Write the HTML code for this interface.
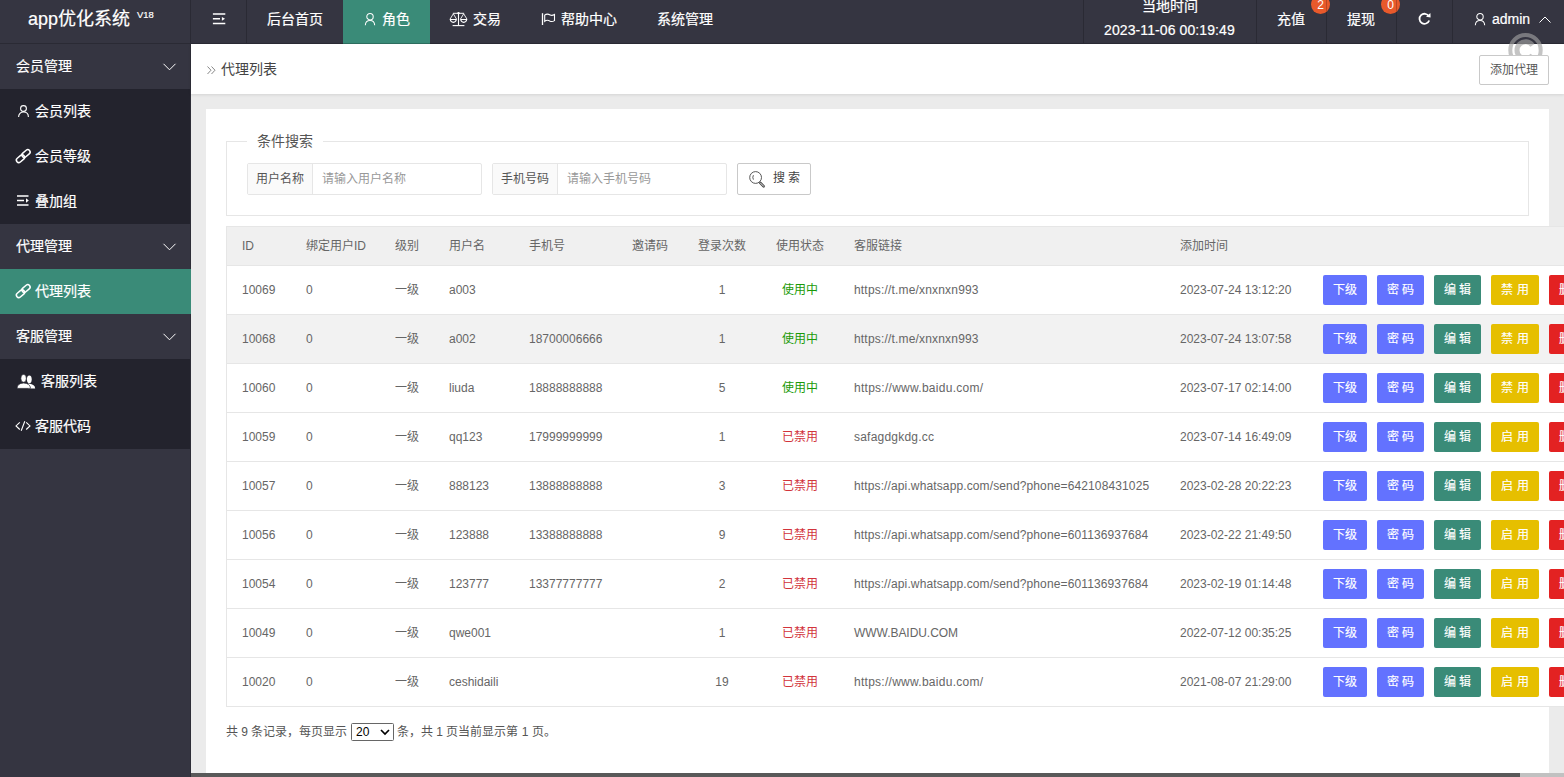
<!DOCTYPE html>
<html lang="zh-CN"><head><meta charset="utf-8">
<style>
*{box-sizing:border-box;margin:0;padding:0}
html,body{width:1564px;height:777px;overflow:hidden;font-family:"Liberation Sans",sans-serif;background:#ebebeb}
.abs{position:absolute}
svg{position:absolute;overflow:visible}
#top{left:0;top:0;width:1564px;height:44px;background:#353541;color:#fff;font-size:14px}
#top .sep{position:absolute;top:0;width:1px;height:43px;background:rgba(0,0,0,.2);z-index:4}
#top .bl{position:absolute;left:0;top:43px;width:1564px;height:1px;background:rgba(0,0,0,.2)}
#top .t{position:absolute;white-space:nowrap;line-height:20px;-webkit-text-stroke:0.2px #fff}
#logo{left:28px;top:7px;font-size:18px;line-height:24px!important;-webkit-text-stroke:0.3px #fff}
#logo sup{font-size:9.4px;position:absolute;left:109px;top:1.5px;line-height:12px;-webkit-text-stroke:0.2px #fff}
#side{left:0;top:44px;width:191px;height:733px;background:#353541;color:#fff;font-size:14px}
#side .g{position:absolute;left:0;width:190px;height:45px;background:#353541}
#side .i{position:absolute;left:0;width:190px;height:45px;background:#23232d}
#side .on{background:#3a8b78;width:191px;z-index:2}
#side .t{position:absolute;left:35px;top:12px;line-height:20px;white-space:nowrap;-webkit-text-stroke:0.2px #fff}
#side .g .t{left:16px}
#side .sl{position:absolute;left:190px;top:0;width:1px;height:733px;background:rgba(0,0,0,.15)}
#crumb{left:191px;top:44px;width:1373px;height:50px;background:#fff;box-shadow:0 1px 3px rgba(0,0,0,.10)}
#card{left:206px;top:109px;width:1343px;height:700px;background:#fff}
.btn{position:absolute;height:30px;line-height:30px;color:#fff;font-size:12px;border-radius:2px;text-align:center;white-space:nowrap;top:9px;-webkit-text-stroke:0.15px #fff}
.b1{background:#6372ff}.b2{background:#3a8b78}.b3{background:#e6bf00}.b4{background:#e32222}
#fs{left:226px;top:141px;width:1303px;height:75px;border:1px solid #e6e6e6}
#legend{left:247px;top:131px;width:76px;height:20px;background:#fff;color:#555;font-size:14px;line-height:20px;text-align:center}
.ig{position:absolute;top:163px;height:32px;border:1px solid #e6e6e6;border-radius:2px;background:#fff;font-size:12px}
.ig .lb{position:absolute;left:0;top:0;width:65px;height:30px;background:#fafafa;border-right:1px solid #e6e6e6;color:#555;line-height:30px;text-align:center}
.ig .ph{position:absolute;left:74px;top:0;line-height:30px;color:#999;white-space:nowrap}
#tbl{left:226px;top:226px;width:1400px;height:481px;border:1px solid #e6e6e6;border-right:0;font-size:12px;color:#666}
.tr{position:absolute;left:0;width:1400px;height:49px;border-top:1px solid #e6e6e6;background:#fff}
.th{top:0;height:38px;border-top:0;background:#f0f0f0}
.tr span{position:absolute;white-space:nowrap;line-height:20px;top:14px}
.th span{top:9px}
.c{text-align:center}
.gr{color:#1a9a08}.rd{color:#d2343c}
#pg{left:226px;top:722px;font-size:12px;color:#555;line-height:20px;white-space:nowrap}
#sel{position:absolute;left:125px;top:1px;width:43px;height:18px;border:1px solid #666;border-radius:1.5px;background:#fff;color:#000;font-size:12px;line-height:16px;padding-left:4px}
#sb{left:191px;top:773px;width:1373px;height:4px;background:#c1c1c1}
#sbt{left:191px;top:773px;width:1329px;height:4px;background:#595959}
</style></head><body>
<div id="top" class="abs">
  <div class="t" id="logo">app优化系统<sup>V18</sup></div>
  <div class="sep" style="left:190px"></div>
  <div class="sep" style="left:246px"></div>
  <!-- hamburger -->
  <svg style="left:212px;top:13px" width="14" height="12" viewBox="0 0 14 12"><path d="M0.9 0.95H13.3M0.9 5.85H8M0.9 10.45H13.3" stroke="#fff" stroke-width="1.5" fill="none"/><path d="M9.9 4L13 5.85L9.9 7.7z" fill="#fff"/></svg>
  <div class="t" style="left:267px;top:9px">后台首页</div>
  <div class="abs" style="left:343px;top:0;width:87px;height:44px;background:#3a8b78"></div>
  <svg style="left:364px;top:13px" width="12" height="12" viewBox="0 0 12 12"><circle cx="6" cy="3.7" r="3.2" stroke="#fff" stroke-width="1.05" fill="none"/><path d="M1.3 12.2C1.5 9.2 3.4 7.5 6 7.5S10.5 9.2 10.7 12.2" stroke="#fff" stroke-width="1.05" fill="none"/></svg>
  <div class="t" style="left:382px;top:9px">角色</div>
  <!-- scale -->
  <svg style="left:449px;top:11px" width="19" height="16" viewBox="0 0 19 16"><g stroke="#fff" fill="none"><path d="M3.9 2.3H15.1" stroke-width="1"/><path d="M9.5 2V14.4" stroke-width="1.1"/><path d="M3.6 14.6H15.4" stroke-width="1.1"/><path d="M4.3 2.8L1 8.2M4.3 2.8L7.6 8.2M14.7 2.8L11.4 8.2M14.7 2.8L18 8.2" stroke-width="0.9"/></g><circle cx="9.5" cy="2.1" r="1.2" fill="#fff"/><path fill-rule="evenodd" d="M0.7 8.1H7.9Q7.6 11.9 4.3 11.9Q1 11.9 0.7 8.1Z M2 9H6.6Q6.2 10.7 4.3 10.7Q2.4 10.7 2 9Z M11.1 8.1H18.3Q18 11.9 14.7 11.9Q11.4 11.9 11.1 8.1Z M12.4 9H17Q16.6 10.7 14.7 10.7Q12.8 10.7 12.4 9Z" fill="#fff"/></svg>
  <div class="t" style="left:473px;top:9px">交易</div>
  <!-- flag -->
  <svg style="left:541px;top:13px" width="15" height="13" viewBox="0 0 15 13"><path d="M1.5 0.2V12" stroke="#fff" stroke-width="1.3"/><path d="M3.7 2.1C5.5 0.6 7.5 1 9.2 2C10.8 2.9 12.2 2.3 13.5 1.5V7.6C12.2 8.4 10.8 9 9.2 8.2C7.5 7.2 5.5 6.8 3.7 8.3Z" stroke="#fff" stroke-width="1.1" fill="none"/></svg>
  <div class="t" style="left:561px;top:9px">帮助中心</div>
  <div class="t" style="left:657px;top:9px">系统管理</div>
  <div class="sep" style="left:1083px"></div>
  <div class="t" style="left:1142px;top:-4px">当地时间</div>
  <div class="t" style="left:1104px;top:20px;letter-spacing:0.1px">2023-11-06 00:19:49</div>
  <div class="sep" style="left:1256px"></div>
  <div class="t" style="left:1277px;top:9px">充值</div>
  <div class="abs" style="left:1311px;top:-5px;width:19px;height:19px;border-radius:50%;z-index:3;background:#e8592b;color:#fff;font-size:12px;line-height:20px;text-align:center">2</div>
  <div class="sep" style="left:1326px"></div>
  <div class="t" style="left:1347px;top:9px">提现</div>
  <div class="abs" style="left:1381px;top:-5px;width:19px;height:19px;border-radius:50%;z-index:3;background:#e8592b;color:#fff;font-size:12px;line-height:20px;text-align:center">0</div>
  <div class="sep" style="left:1396px"></div>
  <!-- refresh -->
  <svg style="left:1418px;top:13px" width="13" height="12" viewBox="0 0 13 12"><path d="M10.8 3.2A5 5 0 1 0 11.2 7.5" stroke="#fff" stroke-width="1.8" fill="none"/><path d="M8 3.8L12.6 4.4L12.4 0Z" fill="#fff"/></svg>
  <div class="sep" style="left:1452px"></div>
  <svg style="left:1474px;top:13px" width="12" height="12" viewBox="0 0 12 12"><circle cx="6" cy="3.7" r="3.2" stroke="#fff" stroke-width="1.05" fill="none"/><path d="M1.3 12.2C1.5 9.2 3.4 7.5 6 7.5S10.5 9.2 10.7 12.2" stroke="#fff" stroke-width="1.05" fill="none"/></svg>
  <div class="t" style="left:1492px;top:9px">admin</div>
  <svg style="left:1539px;top:16px" width="12" height="7" viewBox="0 0 12 7"><path d="M0.5 6.5L6 1L11.5 6.5" stroke="#fff" stroke-width="1" fill="none"/></svg>
  <div class="bl"></div>
</div>
<div id="side" class="abs">
  <div class="g" style="top:0"><div class="t">会员管理</div><svg style="left:163px;top:19px" width="13" height="8" viewBox="0 0 13 8"><path d="M0.5 0.8L6.5 6.8L12.5 0.8" stroke="#fff" stroke-width="1" fill="none"/></svg></div>
  <div class="i" style="top:45px"><svg style="left:18px;top:16px" width="11" height="12" viewBox="0 0 11 12"><circle cx="5.5" cy="3.5" r="2.9" stroke="#fff" stroke-width="1.1" fill="none"/><path d="M0.6 12C0.6 8.8 2.6 7 5.5 7S10.4 8.8 10.4 12" stroke="#fff" stroke-width="1.1" fill="none"/></svg><div class="t">会员列表</div></div>
  <div class="i" style="top:90px"><svg style="left:16px;top:15px" width="15" height="15" viewBox="0 0 15 15"><g stroke="#fff" stroke-width="1.5" fill="none"><rect x="-4.6" y="-2.4" width="9.2" height="4.8" rx="2.4" transform="translate(10 4.5) rotate(-40)"/><rect x="-4.6" y="-2.4" width="9.2" height="4.8" rx="2.4" transform="translate(4.5 9.7) rotate(-40)"/></g></svg><div class="t">会员等级</div></div>
  <div class="i" style="top:135px"><svg style="left:17px;top:16px" width="12" height="11" viewBox="0 0 12 11"><path d="M0 1h11.5M0 5.5h7M0 10h11.5" stroke="#fff" stroke-width="1.3" fill="none"/><path d="M9 3.3L11.8 5.5L9 7.7z" fill="#fff"/></svg><div class="t">叠加组</div></div>
  <div class="g" style="top:180px"><div class="t">代理管理</div><svg style="left:163px;top:19px" width="13" height="8" viewBox="0 0 13 8"><path d="M0.5 0.8L6.5 6.8L12.5 0.8" stroke="#fff" stroke-width="1" fill="none"/></svg></div>
  <div class="i on" style="top:225px"><svg style="left:16px;top:15px" width="15" height="15" viewBox="0 0 15 15"><g stroke="#fff" stroke-width="1.5" fill="none"><rect x="-4.6" y="-2.4" width="9.2" height="4.8" rx="2.4" transform="translate(10 4.5) rotate(-40)"/><rect x="-4.6" y="-2.4" width="9.2" height="4.8" rx="2.4" transform="translate(4.5 9.7) rotate(-40)"/></g></svg><div class="t">代理列表</div></div>
  <div class="g" style="top:270px"><div class="t">客服管理</div><svg style="left:163px;top:19px" width="13" height="8" viewBox="0 0 13 8"><path d="M0.5 0.8L6.5 6.8L12.5 0.8" stroke="#fff" stroke-width="1" fill="none"/></svg></div>
  <div class="i" style="top:315px"><svg style="left:17px;top:14.5px" width="19" height="15" viewBox="0 0 19 15"><ellipse cx="12.3" cy="5.3" rx="2.4" ry="3.9" fill="#fff"/><path d="M11 9.6Q17.8 10 18.2 14.4H11Z" fill="#fff"/><ellipse cx="6.6" cy="4.3" rx="2.7" ry="3.9" fill="#fff" stroke="#23232d" stroke-width="0.6"/><path d="M0 14.4Q0.3 9.2 6.6 9Q13 9.2 13.6 14.4Z" fill="#fff" stroke="#23232d" stroke-width="0.7"/></svg><div class="t" style="left:41px">客服列表</div></div>
  <div class="i" style="top:360px"><svg style="left:15px;top:17px" width="16" height="10" viewBox="0 0 16 10"><path d="M4.8 1.3L1 4.9L4.8 8.5M11.2 1.3L15 4.9L11.2 8.5M9.8 0.3L6.2 9.7" stroke="#fff" stroke-width="1.1" fill="none"/></svg><div class="t">客服代码</div></div>
  <div class="sl"></div>
</div>
<div id="crumb" class="abs">
  <svg style="left:16px;top:22px" width="9" height="9" viewBox="0 0 9 9"><path d="M0.5 0.5L4 4.2L0.5 8M4.5 0.5L8 4.2L4.5 8" stroke="#888" stroke-width="1" fill="none"/></svg>
  <div class="abs" style="left:30px;top:15px;font-size:14px;line-height:20px;color:#444">代理列表</div>
</div>
<svg style="left:1508px;top:33px;z-index:5" width="35" height="35" viewBox="0 0 35 35"><circle cx="17.5" cy="17.2" r="15.2" stroke="rgba(162,162,162,.63)" stroke-width="4" fill="none"/><path d="M24.46 12.32A8.5 8.5 0 1 0 24.46 22.08" stroke="rgba(162,162,162,.63)" stroke-width="5" fill="none"/></svg>
<div class="abs" style="left:1479px;top:55px;width:70px;height:30px;border:1px solid #c9c9c9;border-radius:2px;background:#fff;color:#555;font-size:12px;line-height:28px;text-align:center;z-index:6">添加代理</div>
<div id="card" class="abs"></div>
<div id="fs" class="abs"></div>
<div id="legend" class="abs">条件搜索</div>
<div class="ig" style="left:247px;width:235px"><div class="lb">用户名称</div><div class="ph">请输入用户名称</div></div>
<div class="ig" style="left:492px;width:235px"><div class="lb">手机号码</div><div class="ph">请输入手机号码</div></div>
<div class="abs" style="left:737px;top:163px;width:74px;height:32px;border:1px solid #c9c9c9;border-radius:2px;background:#fff;font-size:12px;color:#444;line-height:30px">
  <svg style="left:11px;top:7px" width="17" height="17" viewBox="0 0 17 17"><circle cx="6.6" cy="6.5" r="5.9" stroke="#444" stroke-width="0.9" fill="none"/><path d="M11.3 11.9L14.7 15.3" stroke="#444" stroke-width="2.6" stroke-linecap="round"/><path d="M11.3 11.9L14.7 15.3" stroke="#fff" stroke-width="0.9" stroke-linecap="round"/><path d="M4.4 4.2Q3.2 6.3 4.4 8.6" stroke="#444" stroke-width="0.9" fill="none"/></svg>
  <div class="abs" style="left:35px;top:-1px;white-space:nowrap">搜 索</div>
</div>
<div id="tbl" class="abs">
<div class="tr th" style="top:0">
<span style="left:15px">ID</span>
<span style="left:79px">绑定用户ID</span>
<span style="left:168px">级别</span>
<span style="left:222px">用户名</span>
<span style="left:302px">手机号</span>
<span style="left:405px">邀请码</span>
<span style="left:471px">登录次数</span>
<span style="left:549px">使用状态</span>
<span style="left:627px">客服链接</span>
<span style="left:953px">添加时间</span>
</div>
<div class="tr" style="top:38px">
<span style="left:15px">10069</span>
<span style="left:79px">0</span>
<span style="left:168px">一级</span>
<span style="left:222px">a003</span>
<span class="c" style="left:456px;width:78px">1</span>
<span class="c gr" style="left:534px;width:78px">使用中</span>
<span style="left:627px;letter-spacing:0.18px">https://t.me/xnxnxn993</span>
<span style="left:953px">2023-07-24 13:12:20</span>
<div class="btn b1" style="left:1096px;width:44px">下级</div>
<div class="btn b1" style="left:1150px;width:47px">密 码</div>
<div class="btn b2" style="left:1207px;width:47px">编 辑</div>
<div class="btn b3" style="left:1264px;width:48px">禁 用</div>
<div class="btn b4" style="left:1322px;width:47px">删 除</div>
</div>
<div class="tr" style="top:87px;background:#f2f2f2">
<span style="left:15px">10068</span>
<span style="left:79px">0</span>
<span style="left:168px">一级</span>
<span style="left:222px">a002</span>
<span style="left:302px">18700006666</span>
<span class="c" style="left:456px;width:78px">1</span>
<span class="c gr" style="left:534px;width:78px">使用中</span>
<span style="left:627px;letter-spacing:0.18px">https://t.me/xnxnxn993</span>
<span style="left:953px">2023-07-24 13:07:58</span>
<div class="btn b1" style="left:1096px;width:44px">下级</div>
<div class="btn b1" style="left:1150px;width:47px">密 码</div>
<div class="btn b2" style="left:1207px;width:47px">编 辑</div>
<div class="btn b3" style="left:1264px;width:48px">禁 用</div>
<div class="btn b4" style="left:1322px;width:47px">删 除</div>
</div>
<div class="tr" style="top:136px">
<span style="left:15px">10060</span>
<span style="left:79px">0</span>
<span style="left:168px">一级</span>
<span style="left:222px">liuda</span>
<span style="left:302px">18888888888</span>
<span class="c" style="left:456px;width:78px">5</span>
<span class="c gr" style="left:534px;width:78px">使用中</span>
<span style="left:627px;letter-spacing:0.27px">https://www.baidu.com/</span>
<span style="left:953px">2023-07-17 02:14:00</span>
<div class="btn b1" style="left:1096px;width:44px">下级</div>
<div class="btn b1" style="left:1150px;width:47px">密 码</div>
<div class="btn b2" style="left:1207px;width:47px">编 辑</div>
<div class="btn b3" style="left:1264px;width:48px">禁 用</div>
<div class="btn b4" style="left:1322px;width:47px">删 除</div>
</div>
<div class="tr" style="top:185px">
<span style="left:15px">10059</span>
<span style="left:79px">0</span>
<span style="left:168px">一级</span>
<span style="left:222px">qq123</span>
<span style="left:302px">17999999999</span>
<span class="c" style="left:456px;width:78px">1</span>
<span class="c rd" style="left:534px;width:78px">已禁用</span>
<span style="left:627px;letter-spacing:0.21px">safagdgkdg.cc</span>
<span style="left:953px">2023-07-14 16:49:09</span>
<div class="btn b1" style="left:1096px;width:44px">下级</div>
<div class="btn b1" style="left:1150px;width:47px">密 码</div>
<div class="btn b2" style="left:1207px;width:47px">编 辑</div>
<div class="btn b3" style="left:1264px;width:48px">启 用</div>
<div class="btn b4" style="left:1322px;width:47px">删 除</div>
</div>
<div class="tr" style="top:234px">
<span style="left:15px">10057</span>
<span style="left:79px">0</span>
<span style="left:168px">一级</span>
<span style="left:222px">888123</span>
<span style="left:302px">13888888888</span>
<span class="c" style="left:456px;width:78px">3</span>
<span class="c rd" style="left:534px;width:78px">已禁用</span>
<span style="left:627px;letter-spacing:0.125px">https://api.whatsapp.com/send?phone=642108431025</span>
<span style="left:953px">2023-02-28 20:22:23</span>
<div class="btn b1" style="left:1096px;width:44px">下级</div>
<div class="btn b1" style="left:1150px;width:47px">密 码</div>
<div class="btn b2" style="left:1207px;width:47px">编 辑</div>
<div class="btn b3" style="left:1264px;width:48px">启 用</div>
<div class="btn b4" style="left:1322px;width:47px">删 除</div>
</div>
<div class="tr" style="top:283px">
<span style="left:15px">10056</span>
<span style="left:79px">0</span>
<span style="left:168px">一级</span>
<span style="left:222px">123888</span>
<span style="left:302px">13388888888</span>
<span class="c" style="left:456px;width:78px">9</span>
<span class="c rd" style="left:534px;width:78px">已禁用</span>
<span style="left:627px;letter-spacing:0.125px">https://api.whatsapp.com/send?phone=601136937684</span>
<span style="left:953px">2023-02-22 21:49:50</span>
<div class="btn b1" style="left:1096px;width:44px">下级</div>
<div class="btn b1" style="left:1150px;width:47px">密 码</div>
<div class="btn b2" style="left:1207px;width:47px">编 辑</div>
<div class="btn b3" style="left:1264px;width:48px">启 用</div>
<div class="btn b4" style="left:1322px;width:47px">删 除</div>
</div>
<div class="tr" style="top:332px">
<span style="left:15px">10054</span>
<span style="left:79px">0</span>
<span style="left:168px">一级</span>
<span style="left:222px">123777</span>
<span style="left:302px">13377777777</span>
<span class="c" style="left:456px;width:78px">2</span>
<span class="c rd" style="left:534px;width:78px">已禁用</span>
<span style="left:627px;letter-spacing:0.125px">https://api.whatsapp.com/send?phone=601136937684</span>
<span style="left:953px">2023-02-19 01:14:48</span>
<div class="btn b1" style="left:1096px;width:44px">下级</div>
<div class="btn b1" style="left:1150px;width:47px">密 码</div>
<div class="btn b2" style="left:1207px;width:47px">编 辑</div>
<div class="btn b3" style="left:1264px;width:48px">启 用</div>
<div class="btn b4" style="left:1322px;width:47px">删 除</div>
</div>
<div class="tr" style="top:381px">
<span style="left:15px">10049</span>
<span style="left:79px">0</span>
<span style="left:168px">一级</span>
<span style="left:222px">qwe001</span>
<span class="c" style="left:456px;width:78px">1</span>
<span class="c rd" style="left:534px;width:78px">已禁用</span>
<span style="left:627px;letter-spacing:-0.05px">WWW.BAIDU.COM</span>
<span style="left:953px">2022-07-12 00:35:25</span>
<div class="btn b1" style="left:1096px;width:44px">下级</div>
<div class="btn b1" style="left:1150px;width:47px">密 码</div>
<div class="btn b2" style="left:1207px;width:47px">编 辑</div>
<div class="btn b3" style="left:1264px;width:48px">启 用</div>
<div class="btn b4" style="left:1322px;width:47px">删 除</div>
</div>
<div class="tr" style="top:430px">
<span style="left:15px">10020</span>
<span style="left:79px">0</span>
<span style="left:168px">一级</span>
<span style="left:222px">ceshidaili</span>
<span class="c" style="left:456px;width:78px">19</span>
<span class="c rd" style="left:534px;width:78px">已禁用</span>
<span style="left:627px;letter-spacing:0.27px">https://www.baidu.com/</span>
<span style="left:953px">2021-08-07 21:29:00</span>
<div class="btn b1" style="left:1096px;width:44px">下级</div>
<div class="btn b1" style="left:1150px;width:47px">密 码</div>
<div class="btn b2" style="left:1207px;width:47px">编 辑</div>
<div class="btn b3" style="left:1264px;width:48px">启 用</div>
<div class="btn b4" style="left:1322px;width:47px">删 除</div>
</div>
</div>
<div id="pg" class="abs">共 9 条记录，每页显示 <div id="sel">20<svg style="left:28px;top:5px" width="10" height="7" viewBox="0 0 10 7"><path d="M1 1L5 5L9 1" stroke="#000" stroke-width="1.7" fill="none"/></svg></div><span style="position:absolute;left:171px">条，共 1 页当前显示第 1 页。</span></div>
<div id="sb" class="abs"></div>
<div id="sbt" class="abs"></div>
</body></html>
